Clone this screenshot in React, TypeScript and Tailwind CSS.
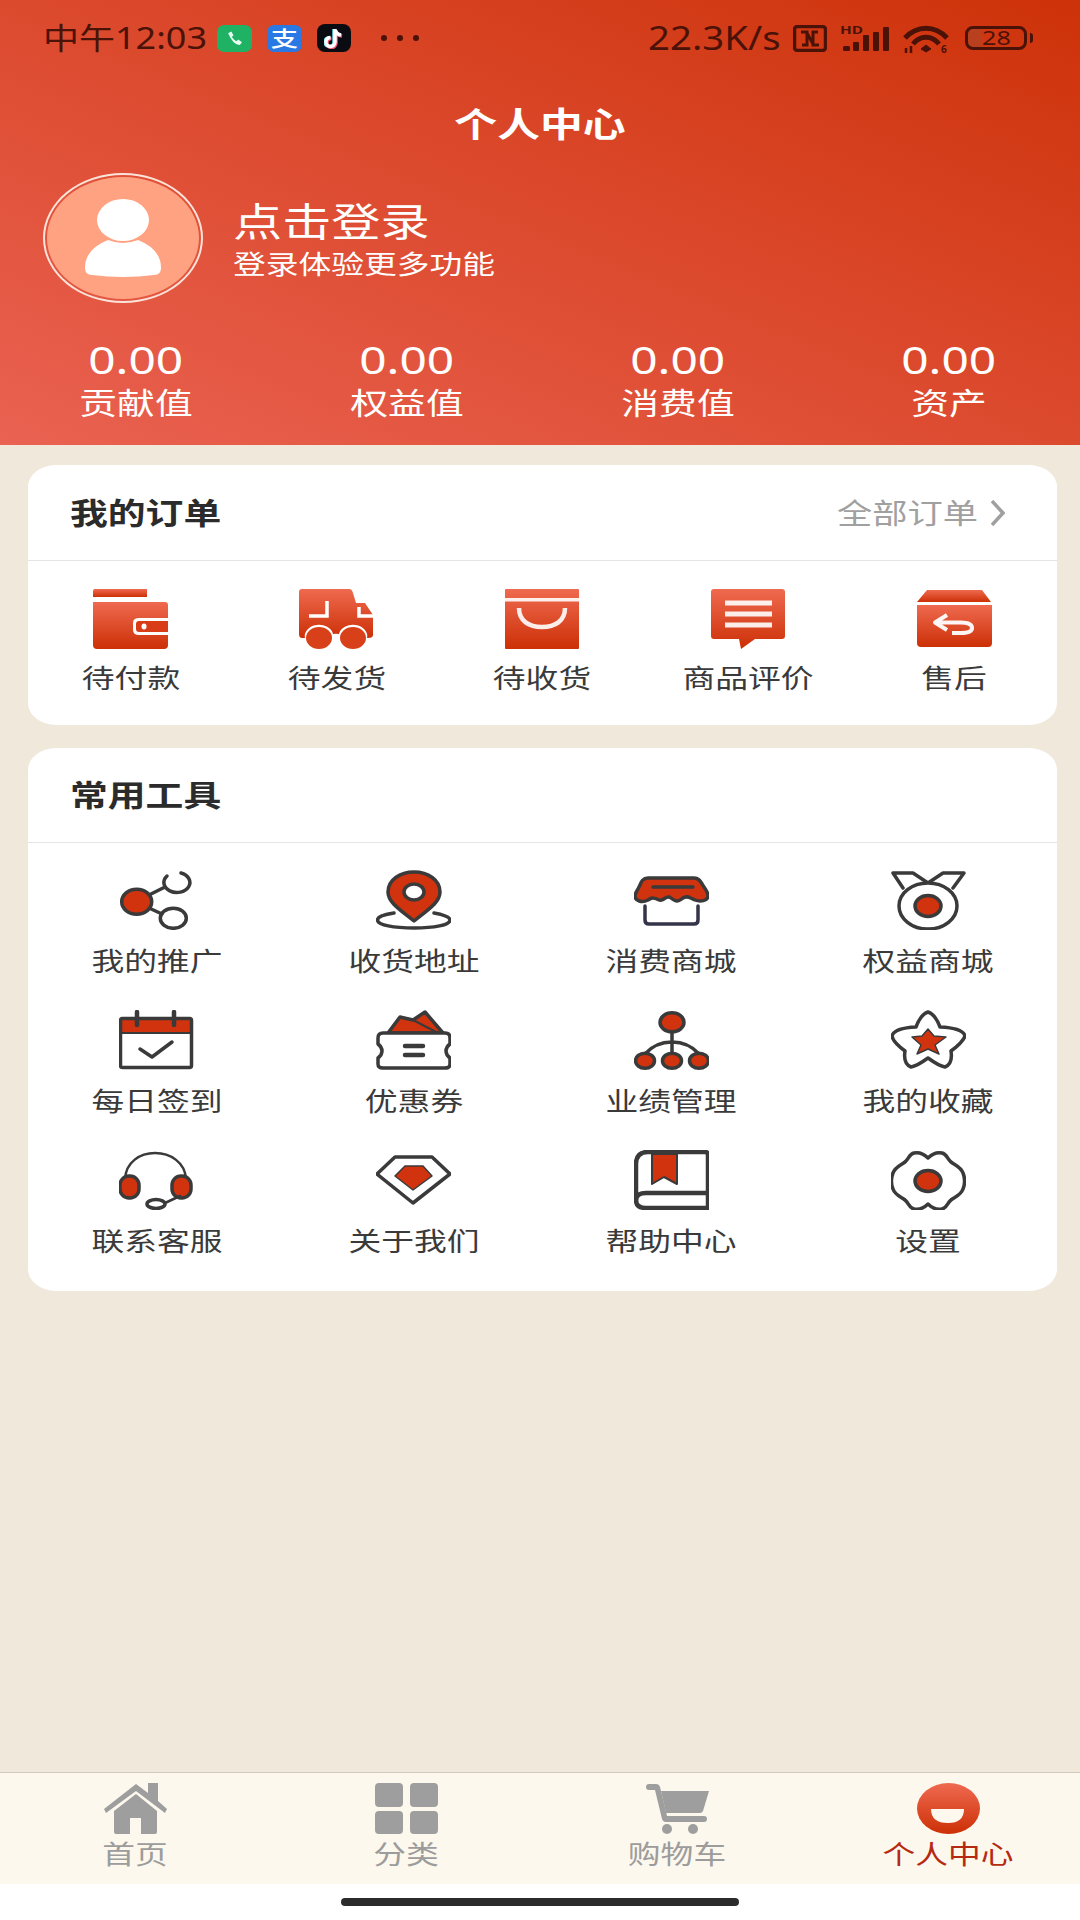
const font = "font-['Noto_Sans','Noto_Sans_CJK_SC',sans-serif]";
// the screenshot is stretched sideways, so text gets the same stretch
const wide = "inline-block whitespace-nowrap scale-x-[1.26]";
const RED = "#d0330e";
const INK = "#3a3a3a";

function GradientDefs() {
  return (
    <svg className="absolute h-0 w-0">
      <defs>
        <linearGradient id="orderRed" x1="0" y1="0" x2="0" y2="1">
          <stop offset="0" stopColor="#ef6a50" />
          <stop offset="1" stopColor="#cc3006" />
        </linearGradient>
      </defs>
    </svg>
  );
}

const orderIcons: Record<string, React.ReactNode> = {
  wallet: (
    <>
      <path d="M2 0H54V8H0V2Q0 0 2 0Z" fill="url(#orderRed)" />
      <path d="M3 13H72Q75 13 75 16V29H46Q40 29 40 34V41Q40 46 46 46H75V56Q75 60 71 60H4Q0 60 0 56V13Z" fill="url(#orderRed)" />
      <path d="M46 32H75V43H46Q43 43 43 40V35Q43 32 46 32Z" fill="#d83d18" />
      <ellipse cx="51" cy="37.5" rx="2.5" ry="3" fill="#fff" />
    </>
  ),
  truck: (
    <>
      <path d="M3 0H50Q53 0 54 4L57 14H66L74 26V46Q74 49 69 49H68A14 11 0 0 0 40 45A14 11 0 0 0 34 45A14 11 0 0 0 6 49H3Q0 49 0 45V3Q0 0 3 0Z" fill="url(#orderRed)" />
      <path d="M28 12V27H10M60 18V27H74" fill="none" stroke="#fff" strokeWidth="3.5" />
      <ellipse cx="20" cy="49" rx="13" ry="11" fill="#d8401a" />
      <ellipse cx="54" cy="49" rx="13" ry="11" fill="#d8401a" />
    </>
  ),
  bag: (
    <>
      <rect x="0" y="0" width="74" height="60" rx="1" fill="url(#orderRed)" />
      <rect x="0" y="9" width="74" height="3.5" fill="#fff" opacity="0.9" />
      <path d="M14 19C14 32 24 38 37 38C50 38 60 32 60 19" fill="none" stroke="#fff" strokeWidth="4.5" opacity="0.9" />
    </>
  ),
  comment: (
    <>
      <path d="M3 0H71Q74 0 74 3V47Q74 50 71 50H44L30 60L28 50H3Q0 50 0 47V3Q0 0 3 0Z" fill="url(#orderRed)" />
      <path d="M14 14H61M14 25H61M14 36H61" stroke="#fff" strokeWidth="5" opacity="0.9" />
    </>
  ),
  refund: (
    <>
      <path d="M10 1H65L74 13H0Z" fill="url(#orderRed)" />
      <path d="M0 16H75V54Q75 58 71 58H4Q0 58 0 54Z" fill="url(#orderRed)" />
      <path d="M30 26L18 33.5L30 41M20 33.5H44Q55 33.5 55 39Q55 44 44 44H35" fill="none" stroke="#fff" strokeWidth="4" strokeLinejoin="round" opacity="0.95" />
    </>
  ),
};

const toolIcons: Record<string, React.ReactNode> = {
  share: (
    <>
      <path d="M30 25L46 17M30 38L43 44" />
      <ellipse cx="17.7" cy="31.7" rx="15" ry="12.5" fill={RED} />
      <path d="M48 6A13 10 0 1 0 62 3" />
      <ellipse cx="54.3" cy="48.3" rx="13" ry="10" />
    </>
  ),
  pin: (
    <>
      <path d="M18 43C6 45 1.5 47 1.5 50C1.5 55 18 58 38 58C58 58 74 55 74 50C74 47 69 45 58 43" />
      <path d="M38 51C26 41 12 33 12 22C12 10 24 2 38 2C52 2 64 10 64 22C64 33 50 41 38 51Z" fill={RED} />
      <ellipse cx="38" cy="22" rx="10" ry="8" fill="#fff" />
    </>
  ),
  store: (
    <>
      <path d="M14 8H60C66 8 67 13 70 17C73 21 74 24 74 26C74 31 66 32 61 30C56 28 53 25 49 28C44 32 42 32 37 28C32 24 30 32 25 30C21 28 18 27 14 30C8 33 1 31 1 26C1 23 3 21 5 17C7 13 8 8 14 8Z" fill={RED} />
      <path d="M19 17H59" />
      <path d="M11 36V50Q11 54 15 54H60Q64 54 64 50V36" stroke="#34344a" />
    </>
  ),
  medal: (
    <>
      <path d="M12 18L2 3H22L37 13L52 3H73L62 18" />
      <ellipse cx="37" cy="36" rx="29" ry="23" fill="#fff" />
      <ellipse cx="37" cy="36" rx="13" ry="10.5" fill={RED} />
    </>
  ),
  calendar: (
    <>
      <path d="M3 8H71Q73 8 73 10V23H1V10Q1 8 3 8Z" fill={RED} stroke="none" />
      <rect x="1.5" y="8.5" width="71" height="49" rx="2" />
      <path d="M1.5 23H72" strokeWidth="2" />
      <path d="M18 2V15M55 2V15" strokeWidth="4.5" />
      <path d="M21 39L33 47L53 32" />
    </>
  ),
  coupon: (
    <>
      <path d="M12 23L24 7L37 10L49 2L67 23Z" fill={RED} />
      <path d="M37 10L62 23" strokeWidth="2" />
      <path d="M7 23H69Q74 23 74 28V34Q70 37 70 41Q70 45 74 48V54Q74 58 69 58H7Q2 58 2 54V48Q6 45 6 41Q6 37 2 34V28Q2 23 7 23Z" fill="#fff" />
      <path d="M29 36H47M29 45H47" strokeWidth="4.5" />
    </>
  ),
  org: (
    <>
      <path d="M38 20V46M11 44C18 36 28 32 38 32C48 32 58 36 65 44" />
      <ellipse cx="38" cy="12.3" rx="12" ry="9.5" fill={RED} />
      <ellipse cx="11" cy="50.7" rx="9.5" ry="7.5" fill={RED} />
      <ellipse cx="38" cy="50.7" rx="9.5" ry="7.5" fill={RED} />
      <ellipse cx="65" cy="50.7" rx="9.5" ry="7.5" fill={RED} />
    </>
  ),
  star: (
    <>
      <path d="M37 2Q44 4 49 17Q72 18 74 26Q72 32 60 41Q62 54 54 57Q48 56 37 48Q26 56 20 57Q12 54 14 41Q2 32 1 26Q3 18 25 17Q30 4 37 2Z" />
      <path d="M37 19L43 26L55 27L44 35L48 44L37 39L26 44L30 35L21 27L31 26Z" fill={RED} strokeWidth="1.5" />
    </>
  ),
  headset: (
    <>
      <path d="M6 29C7 12 21 3 36 3C51 3 66 12 67 29" strokeWidth="2.5" />
      <rect x="1" y="26" width="19" height="22" rx="9" fill={RED} />
      <rect x="53" y="26" width="19" height="22" rx="9" fill={RED} />
      <path d="M61 46L46 53" strokeWidth="2.5" />
      <ellipse cx="37" cy="54" rx="9" ry="4.5" />
    </>
  ),
  diamond: (
    <>
      <path d="M19 7H56L74 24L37 53L1 24Z" />
      <path d="M29 16H47L56 26L37 40L19 26Z" fill={RED} strokeWidth="1.5" />
    </>
  ),
  book: (
    <>
      <path d="M18 4H43V34L30 27L18 34Z" fill={RED} strokeWidth="2" />
      <path d="M14 2H71Q74 2 74 5V58H12Q2 58 2 50V14Q2 2 14 2Z" strokeWidth="4.5" />
      <path d="M2 50Q2 43 12 43H74" strokeWidth="4.5" />
    </>
  ),
  gear: (
    <>
      <path d="M37 8C41 4 46 2 51 3C56 4 56 9 60 12C64 15 70 17 72 23C74 28 74 34 72 39C70 45 64 47 60 50C56 53 56 58 51 59C46 60 41 58 37 54C33 58 28 60 23 59C18 58 18 53 14 50C10 47 4 45 2 39C0 34 0 28 2 23C4 17 10 15 14 12C18 9 18 4 23 3C28 2 33 4 37 8Z" />
      <ellipse cx="37" cy="31" rx="13" ry="10.5" fill={RED} />
    </>
  ),
};

const stats = ["贡献值", "权益值", "消费值", "资产"];

const orders = [
  { icon: "wallet", label: "待付款" },
  { icon: "truck", label: "待发货" },
  { icon: "bag", label: "待收货" },
  { icon: "comment", label: "商品评价" },
  { icon: "refund", label: "售后" },
];

const tools = [
  { icon: "share", label: "我的推广" },
  { icon: "pin", label: "收货地址" },
  { icon: "store", label: "消费商城" },
  { icon: "medal", label: "权益商城" },
  { icon: "calendar", label: "每日签到" },
  { icon: "coupon", label: "优惠券" },
  { icon: "org", label: "业绩管理" },
  { icon: "star", label: "我的收藏" },
  { icon: "headset", label: "联系客服" },
  { icon: "diamond", label: "关于我们" },
  { icon: "book", label: "帮助中心" },
  { icon: "gear", label: "设置" },
];

function StatusBar() {
  return (
    <div className="flex h-[76px] items-center pl-[43px] text-[#4b1208]">
      <span className="mr-[34px] inline-block w-[140px] origin-left scale-x-[1.2] whitespace-nowrap text-[30px] leading-[40px]">中午12:03</span>
      <div className="flex h-[27px] w-[35px] items-center justify-center rounded-[7px] bg-[#1fb265]">
        <svg width="19" height="17" viewBox="0 0 16 16">
          <path d="M2 3L5 1.5L7 5L5.5 6.5Q7.5 9.5 10 10.5L11.5 9L15 11.5L13 14Q7 14.5 2 3Z" fill="#e9fff2" />
        </svg>
      </div>
      <div className="ml-[15px] flex h-[27px] w-[35px] items-center justify-center rounded-[7px] bg-[#2a78e4]">
        <span className="inline-block scale-x-[1.3] text-[21px] font-medium leading-none text-white">支</span>
      </div>
      <div className="ml-[15px] flex h-[28px] w-[34px] items-center justify-center rounded-[8px] bg-[#0b0b12]">
        <svg width="20" height="22" viewBox="0 0 20 22" fill="none" strokeWidth="3.5">
          <path d="M11 2V15A4.5 4.5 0 1 1 6.5 10.5M11 3Q12 7 17 8" stroke="#6fe6ea" transform="translate(-1 0)" />
          <path d="M11 2V15A4.5 4.5 0 1 1 6.5 10.5M11 3Q12 7 17 8" stroke="#f5577a" transform="translate(1 1)" />
          <path d="M11 2V15A4.5 4.5 0 1 1 6.5 10.5M11 3Q12 7 17 8" stroke="#fff" />
        </svg>
      </div>
      <div className="ml-[30px] flex w-[38px] justify-between">
        <span className="h-[6px] w-[6px] rounded-full bg-[#4b1208]" />
        <span className="h-[6px] w-[6px] rounded-full bg-[#4b1208]" />
        <span className="h-[6px] w-[6px] rounded-full bg-[#4b1208]" />
      </div>

      <span className="ml-[229px] mr-[33px] inline-block w-[112px] origin-left scale-x-[1.2] whitespace-nowrap text-[32px] leading-[40px]">22.3K/s</span>
      <svg width="34" height="27" viewBox="0 0 34 27" fill="none" stroke="#4b1208">
        <rect x="1.5" y="1.5" width="31" height="24" rx="3" strokeWidth="3.5" />
        <path d="M8 7H14V20H9M26 20H20V7H25M14 8L20 19" strokeWidth="3" />
      </svg>
      <svg className="ml-[13px]" width="50" height="32" viewBox="0 0 50 32" fill="#4b1208">
        <text x="0" y="12" fontSize="11" fontWeight="700" textLength="23" lengthAdjust="spacingAndGlyphs">HD</text>
        <rect x="3" y="24" width="7" height="5" rx="1.5" />
        <rect x="13" y="20" width="6" height="9" rx="1" />
        <rect x="23" y="13" width="6" height="16" rx="1" />
        <rect x="33" y="10" width="6" height="19" rx="1" />
        <rect x="43" y="5" width="6" height="24" rx="1" />
      </svg>
      <svg className="ml-[13px]" width="47" height="34" viewBox="0 0 47 34" fill="none" stroke="#4b1208">
        <path d="M2 17C14 4 32 4 44 17" strokeWidth="5" />
        <path d="M10 23C17 14 29 14 36 23" strokeWidth="5" />
        <path d="M18 28L23 24L28 28L23 31Z" fill="#4b1208" strokeWidth="1" />
        <path d="M3 32V27M8 32V25" strokeWidth="2.5" />
        <text x="38" y="32" fontSize="10" fill="#4b1208" stroke="none" fontWeight="700">6</text>
      </svg>
      <div className="ml-[15px] flex h-[24px] w-[62px] items-center justify-center rounded-[8px] border-[3px] border-[#4b1208] bg-[linear-gradient(90deg,#b9401f_20%,transparent_30%)]">
        <span className={`${wide} text-[20px] leading-none`}>28</span>
      </div>
      <span className="ml-[3px] h-[10px] w-[3px] rounded-r-full bg-[#4b1208]" />
    </div>
  );
}

function Header() {
  return (
    <div className="h-[445px] bg-[linear-gradient(to_top_right,#ea6252,#dc4a2e_50%,#cd3209)] text-white">
      <StatusBar />
      <div className="mt-[24px] text-center">
        <span className={`${wide} text-[34px] font-semibold leading-[48px]`}>个人中心</span>
      </div>
      <div className="mt-[25px] flex pl-[43px]">
        <div className="flex h-[130px] w-[160px] items-center justify-center rounded-[50%] border-2 border-[#fbe3da] p-[2px]">
          <div className="flex h-full w-full items-center justify-center rounded-[50%] bg-[#ffa282]">
            <svg width="78" height="78" viewBox="0 0 78 78" fill="#fff">
              <ellipse cx="39" cy="21" rx="26" ry="21" />
              <path d="M24 41Q39 47 54 41Q77 50 77 69Q77 76 70 76Q39 80 8 76Q1 76 1 69Q1 50 24 41Z" />
            </svg>
          </div>
        </div>
        <div className="ml-[30px] flex flex-col pt-[24px]">
          <span className={`${wide} origin-left text-[39px] leading-[48px]`}>点击登录</span>
          <span className={`${wide} mt-[2px] origin-left text-[26px] leading-[34px]`}>登录体验更多功能</span>
        </div>
      </div>
      <div className="mt-[34px] grid grid-cols-[repeat(4,271px)] text-center">
        {stats.map((label) => (
          <div key={label} className="flex flex-col items-center">
            <span className={`${wide} text-[38px] leading-[44px]`}>0.00</span>
            <span className={`${wide} mt-[2px] text-[30px] leading-[40px]`}>{label}</span>
          </div>
        ))}
      </div>
    </div>
  );
}

function CardHeader({ title, height, children }: { title: string; height: string; children?: React.ReactNode }) {
  return (
    <div className={`flex items-center justify-between border-b border-[#e4e4e4] pl-[42px] pr-[52px] ${height}`}>
      <span className={`${wide} origin-left text-[30px] font-bold leading-[40px] text-[#2b2b2b]`}>{title}</span>
      {children}
    </div>
  );
}

function OrderCard() {
  return (
    <div className="ml-[28px] mt-[20px] h-[260px] w-[1029px] rounded-[28px/22px] bg-white">
      <CardHeader title="我的订单" height="h-[96px]">
        <div className="flex items-center">
          <span className={`${wide} mr-[12px] origin-right text-[28px] leading-[40px] text-[#a0a0a0]`}>全部订单</span>
          <svg width="15" height="26" viewBox="0 0 15 26" fill="none" stroke="#a0a0a0" strokeWidth="3.5">
            <path d="M2 1L13 13L2 25" />
          </svg>
        </div>
      </CardHeader>
      <div className="grid grid-cols-5 pt-[28px]">
        {orders.map((item) => (
          <div key={item.label} className="flex flex-col items-center">
            <svg width="75" height="60" viewBox="0 0 75 60">
              {orderIcons[item.icon]}
            </svg>
            <span className={`${wide} mt-[11px] text-[26px] leading-[36px] text-[#3a3a3a]`}>{item.label}</span>
          </div>
        ))}
      </div>
    </div>
  );
}

function ToolCard() {
  return (
    <div className="ml-[28px] mt-[23px] h-[543px] w-[1029px] rounded-[28px/22px] bg-white">
      <CardHeader title="常用工具" height="h-[95px]" />
      <div className="grid grid-cols-4 gap-y-[31px] pt-[27px]">
        {tools.map((item) => (
          <div key={item.label} className="flex flex-col items-center">
            <svg width="75" height="60" viewBox="0 0 75 60" fill="none" stroke={INK} strokeWidth="3.5" strokeLinejoin="round" strokeLinecap="round">
              {toolIcons[item.icon]}
            </svg>
            <span className={`${wide} mt-[13px] text-[26px] leading-[36px] text-[#3a3a3a]`}>{item.label}</span>
          </div>
        ))}
      </div>
    </div>
  );
}

function TabBar() {
  const tabs = [
    {
      label: "首页",
      icon: (
        <svg width="63" height="51" viewBox="0 0 63 51" fill="#9e9e9e">
          <path d="M0 26L32 1L44 10V0H54V18L63 26L61 30L32 8L2 30Z" />
          <path d="M10 28L32 11L53 28V49Q53 51 51 51H37V35H26V51H12Q10 51 10 49Z" />
        </svg>
      ),
    },
    {
      label: "分类",
      icon: (
        <svg width="63" height="51" viewBox="0 0 63 51" fill="#9e9e9e">
          <rect x="0" y="0" width="28" height="24" rx="4" />
          <rect x="35" y="0" width="28" height="24" rx="4" />
          <rect x="0" y="28" width="28" height="23" rx="4" />
          <rect x="35" y="28" width="28" height="23" rx="4" />
        </svg>
      ),
    },
    {
      label: "购物车",
      icon: (
        <svg width="63" height="51" viewBox="0 0 63 51" fill="#9e9e9e">
          <path d="M3 1H10Q13 1 14 4L21 33H58Q61 33 61 36Q61 39 58 39H19Q17 39 16 36L9 7H3Q0 7 0 4Q0 1 3 1Z" />
          <path d="M15 8H63L57 28Q56 30 54 30H20Z" />
          <ellipse cx="21" cy="46" rx="5" ry="5" />
          <ellipse cx="47" cy="46" rx="5" ry="5" />
        </svg>
      ),
    },
    {
      label: "个人中心",
      icon: (
        <svg width="63" height="51" viewBox="0 0 63 51">
          <ellipse cx="31.5" cy="25.5" rx="31.5" ry="25.5" fill="url(#orderRed)" />
          <path d="M14 26H47Q47 40 31 40Q14 40 14 26Z" fill="#fff8ee" />
        </svg>
      ),
    },
  ];

  return (
    <div className="grid h-[112px] grid-cols-[repeat(4,271px)] border-t border-[#cfc8bc] bg-[#fdf8ee] pt-[10px]">
      {tabs.map((tab, index) => (
        <div key={tab.label} className="flex flex-col items-center">
          {tab.icon}
          <span className={`${wide} mt-[2px] text-[26px] leading-[36px] ${index === 3 ? "text-[#b52a10]" : "text-[#9c9c9c]"}`}>{tab.label}</span>
        </div>
      ))}
    </div>
  );
}

export default function App() {
  return (
    <div className={`${font} relative flex h-[1920px] w-[1080px] flex-col overflow-hidden bg-[#f1e8dc]`}>
      <GradientDefs />
      <Header />
      <OrderCard />
      <ToolCard />
      <div className="flex-1" />
      <TabBar />
      <div className="flex h-[36px] justify-center bg-white pt-[14px]">
        <div className="h-[8px] w-[398px] rounded-full bg-[#2b2b2b]" />
      </div>
    </div>
  );
}
